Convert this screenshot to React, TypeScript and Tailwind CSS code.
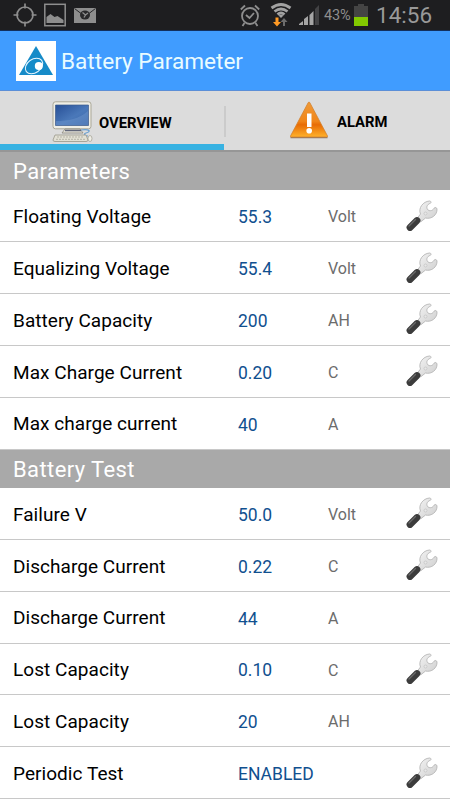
type Param = {
	name: string
	value: string
	unit?: string
	editable?: boolean
}

const parameters: Param[] = [
	{ name: 'Floating Voltage', value: '55.3', unit: 'Volt', editable: true },
	{ name: 'Equalizing Voltage', value: '55.4', unit: 'Volt', editable: true },
	{ name: 'Battery Capacity', value: '200', unit: 'AH', editable: true },
	{ name: 'Max Charge Current', value: '0.20', unit: 'C', editable: true },
	{ name: 'Max charge current', value: '40', unit: 'A' },
]

const batteryTest: Param[] = [
	{ name: 'Failure V', value: '50.0', unit: 'Volt', editable: true },
	{ name: 'Discharge Current', value: '0.22', unit: 'C', editable: true },
	{ name: 'Discharge Current', value: '44', unit: 'A' },
	{ name: 'Lost Capacity', value: '0.10', unit: 'C', editable: true },
	{ name: 'Lost Capacity', value: '20', unit: 'AH' },
	{ name: 'Periodic Test', value: 'ENABLED', editable: true },
]

export default function App() {
	return (
		<div className="flex h-[800px] w-[450px] flex-col overflow-hidden bg-white font-['Roboto',sans-serif] text-black">
			<StatusBar />
			<header className="flex h-[60px] shrink-0 items-center border-b border-[#5b8fd8] bg-[#409cff] pl-4 pt-px">
				<Logo />
				<h1 className="ml-[5px] pt-[2px] text-[22.6px] leading-none text-[#e9fbff]">
					Battery Parameter
				</h1>
			</header>
			<Tabs />
			<main className="shrink-0">
				<Section title="Parameters" items={parameters} />
				<Section title="Battery Test" items={batteryTest} />
			</main>
		</div>
	)
}

function Section({ title, items }: { title: string; items: Param[] }) {
	return (
		<section>
			<h2 className="flex h-[38.3px] items-center bg-[#a9a9a9] pl-[13px] pt-px text-[22px] tracking-[0.4px] text-white">
				{title}
			</h2>
			{items.map((item, index) => (
				<Row key={index} item={item} />
			))}
		</section>
	)
}

function Row({ item }: { item: Param }) {
	return (
		<div className="flex h-[51.88px] items-center border-b border-[#c8c8c8] pl-[13px]">
			<span className="w-[225px] pt-[3px] text-[19px] tracking-[0.05px]">
				{item.name}
			</span>
			<span className="w-[90px] pt-[3px] text-[17.5px] text-[#11508f]">
				{item.value}
			</span>
			<span className="w-[76px] pt-[3px] text-[16px] text-[#6c6c6c]">
				{item.unit}
			</span>
			{item.editable && <Wrench />}
		</div>
	)
}

function StatusBar() {
	return (
		<div className="flex h-[31px] shrink-0 items-center border-b border-[#12305f] bg-[#1e1e20] text-[#8e8e8e]">
			<svg className="ml-[13px] h-6 w-6" viewBox="0 0 24 24" fill="none" stroke="currentColor" strokeWidth="1.7">
				<circle cx="12" cy="12" r="8" />
				<path d="M12 .5v5M12 18.5v5M.5 12h5M18.5 12h5" />
			</svg>
			<svg className="ml-[7px] h-6 w-[22px]" viewBox="0 0 22 24">
				<rect x=".8" y="1.3" width="20.4" height="21.4" fill="none" stroke="currentColor" strokeWidth="1.5" />
				<path d="M2.5 20v-6l4-3 4 3 3-1 6 4v3z" fill="currentColor" />
			</svg>
			<svg className="ml-2 h-[15px] w-[22px]" viewBox="0 0 22 15">
				<path d="M0 0h22v15H0z" fill="currentColor" />
				<path d="M.5.5 9 7m12.5-6.5L13 7" stroke="#29292b" strokeWidth="1" />
				<ellipse cx="11" cy="7" rx="5" ry="4.5" fill="#29292b" />
				<path d="m8.5 4.5 3 2.5 2.5-2M11.5 7 10 9.5" fill="none" stroke="currentColor" strokeWidth="1.3" />
			</svg>
			<svg className="ml-[144px] h-[23px] w-5" viewBox="0 0 20 23" fill="none" stroke="currentColor" strokeWidth="1.8">
				<circle cx="10" cy="12" r="8" />
				<path d="m6 11 3.5 3L14 9M.8 5.5 5 1.5M19.2 5.5 15 1.5M4.500 19l-2 3M15.5 19l2 3" />
			</svg>
			<svg className="ml-[10px] h-6 w-[22px]" viewBox="0 0 22 24" fill="none">
				<path
					d="M1.500 5q9.500-7 19 0M4.500 8.500q6.500-5 13 0M7.500 11.500q3.500-3 7 0"
					stroke="#a2a2a2"
					strokeWidth="2.8"
				/>
				<path d="m8.500 12.500 2.500 2.500 2.500-2.500q-2.500-1.500-5 0z" fill="#a2a2a2" />
				<path d="M5.500 14.500h3V19H11l-4 4.500L3 19h2.500z" fill="#ff9a24" />
				<path d="M13 23v-4h-2.500l3.500-4 3.500 4H15v4z" fill="#6c6c6c" />
			</svg>
			<svg className="ml-[7px] h-[20px] w-[21px]" viewBox="0 0 21 20">
				<path d="M0 20v-1l4-3v4zM5 20v-6l4-3v9zM10.5 20V10l4-4v14z" fill="#a5a5a5" />
				<path d="M16 20V4l4-4v20z" fill="#424244" />
			</svg>
			<span className="ml-[4px] w-[30px] whitespace-nowrap pt-[2px] text-[14.5px] leading-none tracking-[-0.2px]">
				43%
			</span>
			<svg className="h-[22px] w-[14px]" viewBox="0 0 14 22">
				<path d="M0 2h4V0h6v2h4v20H0z" fill="#444" />
				<path d="M0 13h14v9H0z" fill="#82c900" />
			</svg>
			<span className="ml-2 text-[22.5px] leading-none text-[#999]">14:56</span>
		</div>
	)
}

function Tabs() {
	return (
		<nav className="flex h-[61px] shrink-0 border-b-2 border-[#969696] bg-[#dcdcdc] text-[14.8px] font-bold">
			<div className="flex w-[224px] flex-col">
				<div className="flex flex-1 items-center pl-[52px] pt-[8px]">
					<ComputerIcon />
					<span className="ml-[6px] pt-[3px]">OVERVIEW</span>
				</div>
				<div className="h-[6px] bg-[#38b2e2]" />
			</div>
			<div className="mt-[15px] h-[31px] w-[2px] bg-[#cbcbcb]" />
			<div className="flex items-center pl-[63px]">
				<WarningIcon />
				<span className="ml-[8px] pt-[3px]">ALARM</span>
			</div>
		</nav>
	)
}

function Logo() {
	return (
		<svg className="h-10 w-10" viewBox="0 0 40 40">
			<path d="M0 0h40v40H0z" fill="#fff" />
			<path d="M20 5 37 34H3z" fill="#168bc8" />
			<ellipse cx="18" cy="25" rx="9.5" ry="6.8" transform="rotate(-36 18 25)" fill="none" stroke="#e8f6ff" strokeWidth="1" />
			<circle cx="22.8" cy="25" r="4" fill="#fff" />
		</svg>
	)
}

function ComputerIcon() {
	return (
		<svg className="h-[41px] w-[41px]" viewBox="0 0 41 41">
			<defs>
				<linearGradient id="screen" x2="1" y2="1">
					<stop stopColor="#274f96" />
					<stop offset=".55" stopColor="#4a78b9" />
					<stop offset="1" stopColor="#3a67aa" />
				</linearGradient>
			</defs>
			<rect x="1" y=".8" width="38" height="27" rx="2.5" fill="#efeee6" stroke="#aaa797" />
			<path d="M3.5 4h33v20.5h-33z" fill="url(#screen)" stroke="#3e5c8d" strokeWidth=".7" />
			<path d="M4 20c12 0 23-2 32-10v14H4z" fill="#84aad9" opacity=".3" />
			<path d="m13 28-3 4h21l-3-4z" fill="#e4e2d8" stroke="#8b897e" strokeWidth=".8" />
			<path d="M13 29.5h16" stroke="#616679" strokeWidth="1.5" />
			<path d="M29 29c8-1 11 1 5 3-3 1-1 3 2 3" fill="none" stroke="#6aa0d1" strokeWidth="1.2" />
			<path d="m3 34-2 5q0 1.5 2 1.5h31q2 0 2-1.5l-2-5z" fill="#e2e0d4" stroke="#a09e92" strokeWidth=".9" />
			<path d="M5 36h27M4 38.3h29" stroke="#b5b3a7" strokeDasharray="2 1" />
			<ellipse cx="38" cy="37.5" rx="2" ry="3" fill="#efeee6" stroke="#a6a498" strokeWidth=".8" />
		</svg>
	)
}

function WarningIcon() {
	return (
		<svg className="mb-[2px] h-[38px] w-[40px]" viewBox="0 0 40 38">
			<defs>
				<linearGradient id="warn" x2="0" y2="1">
					<stop stopColor="#ef9a38" />
					<stop offset=".55" stopColor="#f08519" />
					<stop offset=".65" stopColor="#e86c05" />
					<stop offset="1" stopColor="#ffb22b" />
				</linearGradient>
			</defs>
			<path d="M1.5 36.5h37" stroke="#8f7865" strokeWidth="1.5" />
			<path d="M20 1Q20.5 1 21 2l17.5 33q.5 1-1 1h-35q-1.5 0-1-1L19 2q.5-1 1-1z" fill="url(#warn)" stroke="#d3812f" strokeWidth=".8" />
			<path d="M18 12.5h4.5V26H18z" fill="#fff" />
			<circle cx="20.2" cy="29.8" r="2.8" fill="#fff" />
		</svg>
	)
}

function Wrench() {
	return (
		<svg className="mt-[2px] h-[34px] w-[34px]" viewBox="0 0 34 34">
			<defs>
				<linearGradient id="steel" x2="1" y2="1">
					<stop stopColor="#f4f4f4" />
					<stop offset="1" stopColor="#cecece" />
				</linearGradient>
			</defs>
			<path
				d="M13 18.5 16.500 14c-2.500-6 2.500-12.500 9-13 1.500 0 2 1.500 1 2.200-4 1.300-4.500 4.800-2.500 6.800 2.500 1.500 5 .5 6.200-2 .8-1 2.600-.5 2.800 1 .3 6-5.500 10.500-11.500 9l-5 4z"
				fill="url(#steel)"
				stroke="#b6b6b6"
				strokeWidth=".9"
				strokeLinejoin="round"
			/>
			<circle cx="21.5" cy="13.5" r="1.5" fill="#e8e8e8" stroke="#c2c2c2" strokeWidth=".7" />
			<path d="m6 27.500 7-7" stroke="#3c3c3c" strokeWidth="6.8" strokeLinecap="round" />
			<path d="m5 26 6.500-6.500" stroke="#6a6a6a" strokeWidth="1.3" strokeLinecap="round" />
		</svg>
	)
}
